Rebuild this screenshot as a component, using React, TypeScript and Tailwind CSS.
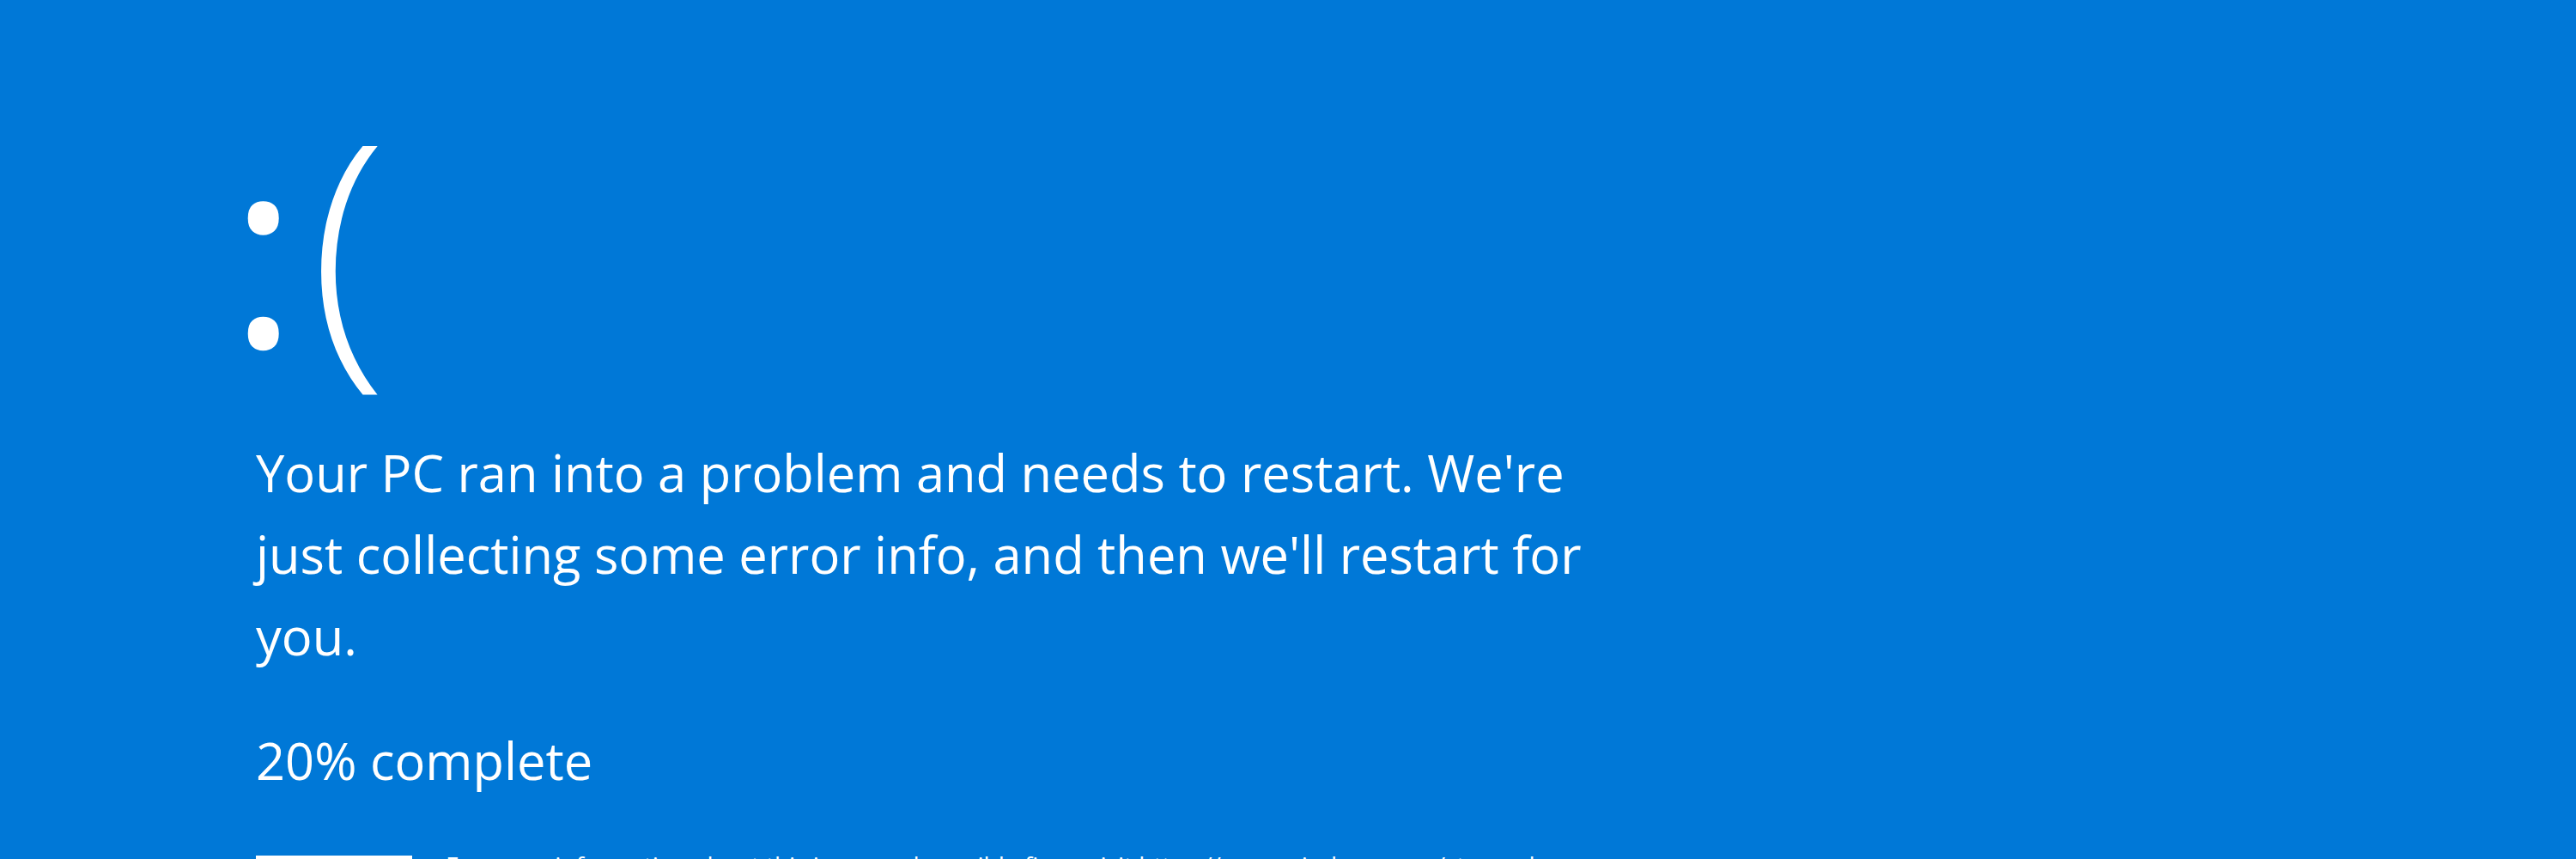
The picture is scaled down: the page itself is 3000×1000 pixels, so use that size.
import React from "react";

function QR() {
  const cells: [number, number][] = [];
  const n = 25;
  for (let y = 0; y < n; y++) {
    for (let x = 0; x < n; x++) {
      const inFinder =
        (x < 8 && y < 8) || (x >= n - 8 && y < 8) || (x < 8 && y >= n - 8);
      if (inFinder) continue;
      if (((x * 7 + y * 13 + x * y) % 5) < 2) cells.push([x, y]);
    }
  }
  const finder = (ox: number, oy: number) => (
    <g key={`${ox}-${oy}`}>
      <rect x={ox} y={oy} width={7} height={7} fill="#0078d7" />
      <rect x={ox + 1} y={oy + 1} width={5} height={5} fill="#ffffff" />
      <rect x={ox + 2} y={oy + 2} width={3} height={3} fill="#0078d7" />
    </g>
  );
  return (
    <svg width="182" height="182" viewBox="-2 -2 29 29" className="shrink-0 bg-white">
      {cells.map(([x, y]) => (
        <rect key={`${x}_${y}`} x={x} y={y} width={1} height={1} fill="#0078d7" />
      ))}
      {finder(0, 0)}
      {finder(n - 7, 0)}
      {finder(0, n - 7)}
    </svg>
  );
}

export default function App() {
  return (
    <div className="w-[3000px] h-[1000px] overflow-hidden bg-[#0078d7] text-white font-['Open_Sans','Noto_Sans',sans-serif]">
      <div className="pl-[298px] pt-[112px] flex flex-col">
        <div className="flex items-start h-[332px]">
          <span className="-ml-[32px] mt-[17px] text-[310px] leading-[310px] font-normal">:</span>
          <span className="ml-[13px] text-[332px] leading-[332px] font-light">(</span>
        </div>
        <div className="mt-[58px] text-[59.6px] leading-[95px] font-normal whitespace-nowrap">
          <p>Your PC ran into a problem and needs to restart. We're</p>
          <p>just collecting some error info, and then we'll restart for</p>
          <p>you.</p>
        </div>
        <p className="mt-[50px] text-[59.6px] leading-[95px] whitespace-nowrap">20% complete</p>
        <div className="mt-[64px] flex gap-[39px]">
          <QR />
          <div className="text-[28px] leading-[40px] -mt-[9px] whitespace-nowrap">
            <p>For more information about this issue and possible fixes, visit https://www.windows.com/stopcode</p>
            <p className="mt-[20px]">If you call a support person, give them this info:</p>
            <p>Stop code: CRITICAL_PROCESS_DIED</p>
          </div>
        </div>
      </div>
    </div>
  );
}
